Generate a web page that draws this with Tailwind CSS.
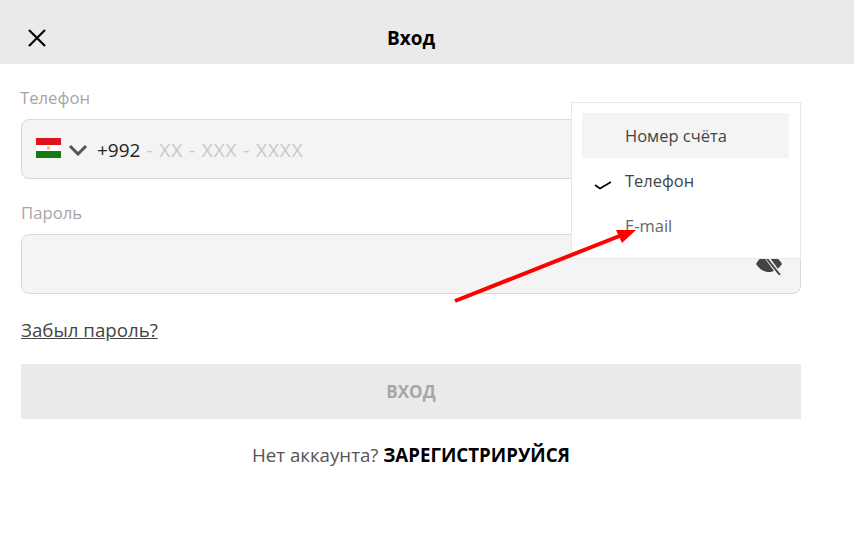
<!DOCTYPE html>
<html lang="ru">
<head>
  <meta charset="UTF-8" />
  <title>Вход</title>
  <script src="https://cdn.jsdelivr.net/npm/@tailwindcss/browser@4"></script>
</head>
<body class="bg-white font-['Open_Sans',sans-serif] overflow-hidden">
  <div class="relative w-[854px] h-[557px]">
    <!-- header -->
    <header class="h-16 bg-[#eaeaea] flex items-center w-full relative pt-[12px]">
      <button class="ml-[28px]">
        <svg width="18" height="18" viewBox="0 0 18 18" class="block"><path d="M1 1L17 17M17 1L1 17" stroke="#000" stroke-width="2.2" fill="none"/></svg>
      </button>
      <h1 class="absolute left-0 w-[822px] text-center text-[19px] font-bold text-black">Вход</h1>
    </header>

    <main class="w-[780px] ml-[21px] pt-[22px]">
      <label class="block text-[16.7px] leading-6 text-[#a6a6a6] -ml-px">Телефон</label>
      <div class="mt-[9px] h-[60px] rounded-lg border border-[#d9d9d9] bg-[#f4f4f4] flex items-center pl-[14px]">
        <svg width="25" height="20" viewBox="0 0 25 20" class="block -mt-[2px]">
          <rect width="25" height="7" fill="#de1421"/>
          <rect y="7" width="25" height="6" fill="#fff"/>
          <rect y="13" width="25" height="7" fill="#157a12"/>
          <rect x="11" y="8.5" width="3" height="3" fill="#f5c63c"/>
        </svg>
        <svg width="20" height="12" viewBox="0 0 20 12" class="block ml-[7px] mt-[2px]"><path d="M2 2L10 10L18 2" stroke="#555" stroke-width="3" fill="none"/></svg>
        <span class="ml-[9px] mt-[3px] text-[19px] text-[#222]">+992</span>
        <span class="ml-[6px] mt-[3px] text-[19px] tracking-[0.9px] text-[#c8c8c8]">- XX - XXX - XXXX</span>
      </div>

      <label class="block mt-[22px] text-[16.7px] leading-6 text-[#a6a6a6]">Пароль</label>
      <div class="mt-[9px] h-[60px] rounded-lg border border-[#d9d9d9] bg-[#f4f4f4] flex items-center justify-end pr-[17px]">
        <svg width="28" height="20" viewBox="0 0 28 20" class="block mt-[1px]">
          <path d="M1 9C5 2 10 0 14 0C18 0 23 2 27 9C23 15 18 17 14 17C10 17 5 15 1 9Z" fill="#444"/>
          <path d="M10 0L24 19" stroke="#f4f4f4" stroke-width="4.5"/>
          <path d="M9 0L25 20" stroke="#444" stroke-width="2"/>
        </svg>
      </div>

      <a class="block mt-[24px] text-[18.7px] leading-6 text-[#444] underline">Забыл пароль?</a>

      <button class="block w-full h-[55px] mt-[22px] bg-[#eaeaea] text-[17px] font-bold text-[#a6a6a6]">ВХОД</button>

      <p class="mt-[24px] text-center text-[18.7px] leading-6 text-[#555]">Нет аккаунта? <span class="font-bold text-black">ЗАРЕГИСТРИРУЙСЯ</span></p>
    </main>

    <!-- dropdown menu -->
    <div class="absolute left-[571px] top-[102px] w-[230px] h-[157px] bg-white border border-[#e8e8e8] pt-[10px] pl-[10px] pr-[11px] text-[16.5px] text-[#444]">
      <div class="h-[45px] bg-[#f4f4f4] flex items-center pl-[43px] pt-[2px]">Номер счёта</div>
      <div class="h-[45px] flex items-center relative pl-[43px] pt-[2px]">
        <svg width="18" height="10" viewBox="0 0 18 10" class="absolute left-[12px] top-[22px]"><path d="M1 5L6 8.5L17 2" stroke="#000" stroke-width="1.6" fill="none"/></svg>
        Телефон
      </div>
      <div class="h-[45px] flex items-center pl-[43px] pt-[2px] text-[#666]">E-mail</div>
    </div>

    <!-- red arrow annotation -->
    <svg width="854" height="557" viewBox="0 0 854 557" class="absolute left-0 top-0 pointer-events-none">
      <path d="M455 301L622 235" stroke="#fe0000" stroke-width="4" fill="none"/>
      <path d="M636 230L616 230L622 243Z" fill="#fe0000"/>
    </svg>
  </div>
</body>
</html>
